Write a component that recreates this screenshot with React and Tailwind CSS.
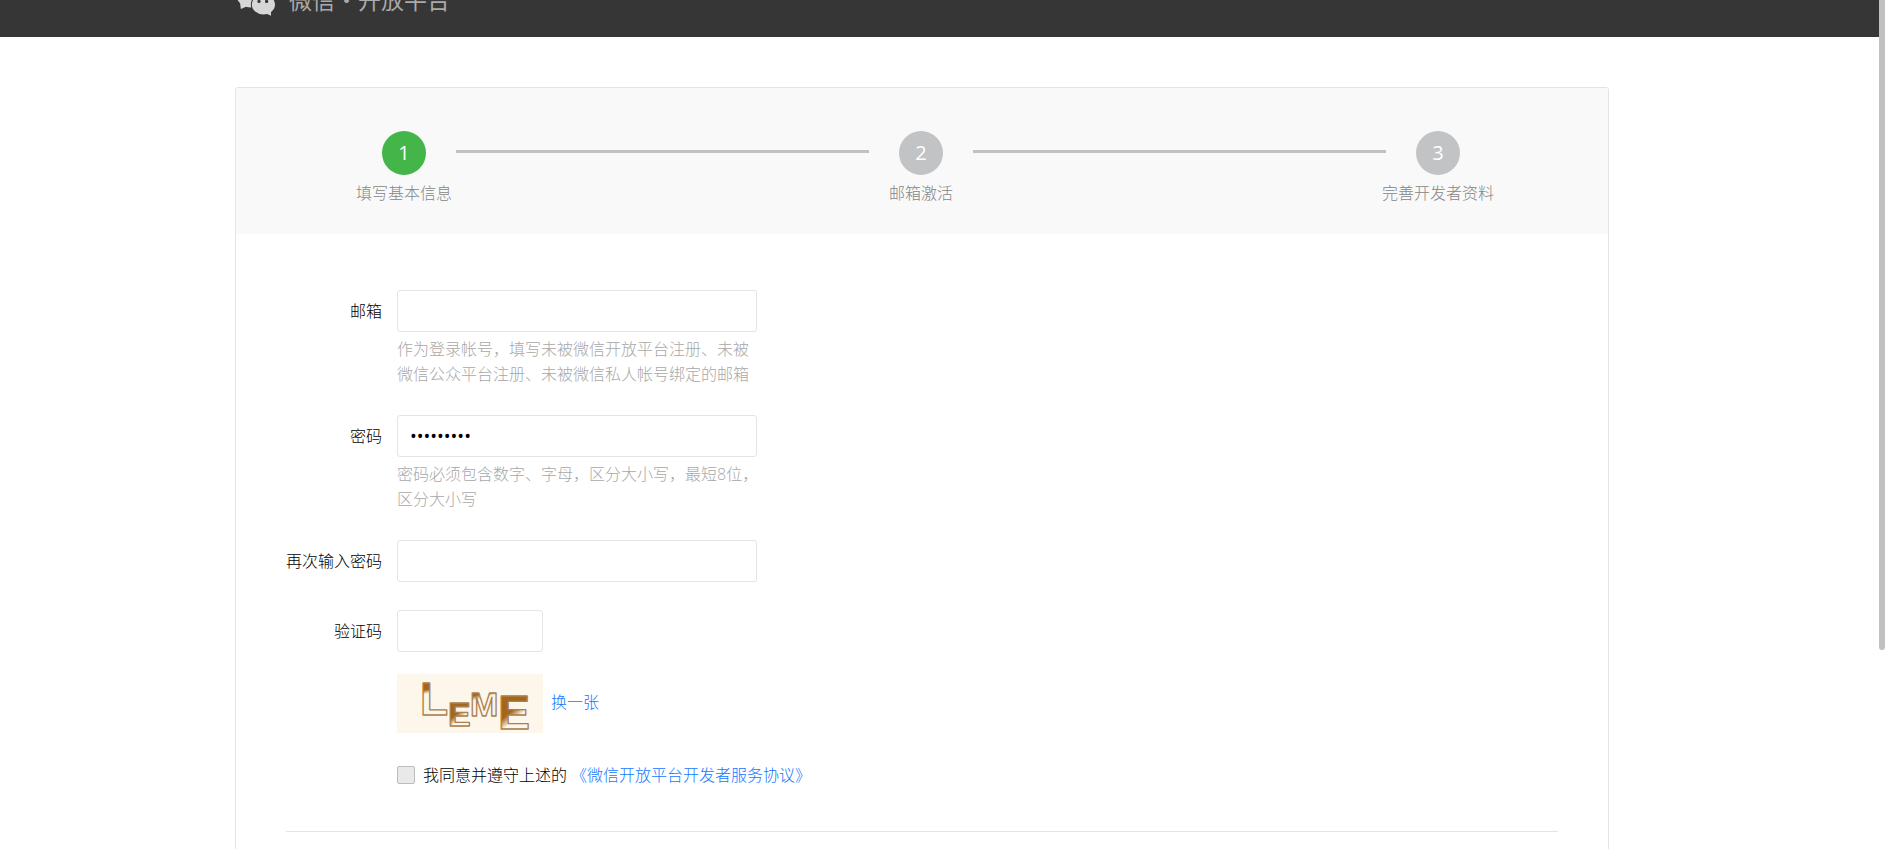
const STEPS = ['填写基本信息', '邮箱激活', '完善开发者资料'];

const INPUT =
  'block h-[42px] max-w-full rounded-[3px] border border-[#e4e4e4] bg-white px-3 text-black outline-none';

function Logo() {
  return (
    <svg className="h-[38px] w-[42px] shrink-0" viewBox="0 0 42 38" aria-hidden="true">
      <ellipse cx="16" cy="14" rx="14.5" ry="12.5" fill="#d6d6d6" />
      <path d="M5 21 L5.8 28 L14 24.5 Z" fill="#d6d6d6" />
      <ellipse cx="28.4" cy="23.6" rx="12.6" ry="10.9" fill="#363636" />
      <ellipse cx="28.4" cy="23.6" rx="11.6" ry="9.9" fill="#d6d6d6" />
      <path d="M30 32 L36 34.8 L36 28 Z" fill="#d6d6d6" />
      <circle cx="24" cy="20.4" r="1.6" fill="#363636" />
      <circle cx="31.6" cy="20.4" r="1.6" fill="#363636" />
    </svg>
  );
}

function Header() {
  return (
    <header className="h-[37px] overflow-hidden bg-[#363636] pl-[235px]">
      <div className="-mt-[37px] flex h-[74px] items-center gap-3">
        <Logo />
        <span className="whitespace-nowrap text-[23px] font-normal text-[#aaa]">微信・开放平台</span>
      </div>
    </header>
  );
}

function Step({ index, label, active }) {
  return (
    <li className="flex w-[104px] shrink-0 flex-col items-center">
      <span
        className={
          'flex size-11 items-center justify-center rounded-full text-xl font-normal text-white ' +
          (active ? 'bg-[#44b549]' : 'bg-[#c2c3c5]')
        }
      >
        {index}
      </span>
      <span className="mt-1.5 whitespace-nowrap leading-6 text-[#868686]">{label}</span>
    </li>
  );
}

function Steps() {
  return (
    <ol className="flex h-[146px] items-start bg-[#f9f9f9] pt-[43px] pr-[118px] pl-[116px]">
      {STEPS.map((label, i) => [
        i > 0 && <li key={'line' + i} aria-hidden="true" className="mt-[19px] h-[3px] flex-1 bg-[#c1c1c1]" />,
        <Step key={label} index={i + 1} label={label} active={i === 0} />,
      ])}
    </ol>
  );
}

function Field({ id, label, hint, children }) {
  return (
    <div className="flex items-start gap-[15px]">
      <label htmlFor={id} className="w-24 shrink-0 whitespace-nowrap text-right leading-[42px] text-black">
        {label}
      </label>
      <div>
        {children}
        {hint && <p className="mt-[5px] w-[364px] leading-[25px] text-[#a8a8a8]">{hint}</p>}
      </div>
    </div>
  );
}

function Captcha() {
  return (
    <svg
      className="h-[59px] w-[146px] overflow-visible bg-[#fdf6eb]"
      viewBox="0 0 146 59"
      role="img"
      aria-label="LEME"
      fontFamily="Liberation Sans, sans-serif"
      fontWeight="700"
      stroke="#a8814f"
      strokeWidth="1.3"
      strokeLinejoin="round"
    >
      <defs>
        <linearGradient id="ink-corner" x1="0" y1="0" x2="0.1" y2="1">
          <stop offset="0.34" stopColor="#a5651c" />
          <stop offset="0.42" stopColor="#fdf6eb" />
        </linearGradient>
        <linearGradient id="ink-edge" x1="0" y1="0" x2="0.2" y2="1">
          <stop offset="0.3" stopColor="#a5651c" />
          <stop offset="0.42" stopColor="#fdf6eb" />
        </linearGradient>
        <linearGradient id="ink-half" x1="0" y1="0" x2="0.5" y2="1">
          <stop offset="0.55" stopColor="#a5651c" />
          <stop offset="0.72" stopColor="#fdf6eb" />
        </linearGradient>
      </defs>
      <text x="23" y="41" fontSize="46" fill="url(#ink-corner)">L</text>
      <text x="51" y="52" fontSize="34" fill="url(#ink-half)">E</text>
      <text x="73" y="42" fontSize="34" fill="url(#ink-edge)">M</text>
      <text x="101" y="55" fontSize="48" fill="url(#ink-half)">E</text>
    </svg>
  );
}

function RegisterForm() {
  return (
    <form className="px-[50px] pt-14 pb-24" onSubmit={(e) => e.preventDefault()}>
      <div className="flex flex-col gap-7">
        <Field id="email" label="邮箱" hint="作为登录帐号，填写未被微信开放平台注册、未被微信公众平台注册、未被微信私人帐号绑定的邮箱">
          <input id="email" type="email" className={INPUT + ' w-[360px] text-base'} />
        </Field>
        <Field id="password" label="密码" hint="密码必须包含数字、字母，区分大小写，最短8位，区分大小写">
          <input
            id="password"
            type="password"
            defaultValue="abcd12345"
            className={INPUT + ' w-[360px] text-lg font-normal'}
          />
        </Field>
        <Field id="confirm" label="再次输入密码">
          <input id="confirm" type="password" className={INPUT + ' w-[360px] text-lg font-normal'} />
        </Field>
        <Field id="code" label="验证码">
          <input id="code" type="text" className={INPUT + ' w-[146px] text-base'} />
        </Field>
      </div>
      <div className="pl-[111px]">
        <div className="mt-[22px] flex items-center gap-2">
          <Captcha />
          <a href="#captcha" className="pb-1 text-[#1477ff]">换一张</a>
        </div>
        <div className="mt-[30px] flex h-6 items-center">
          <input
            id="agree"
            type="checkbox"
            className="size-[18px] appearance-none rounded-[2px] border border-[#bcbcbc] bg-[#e9e9e9]"
          />
          <label htmlFor="agree" className="ml-2 text-black">我同意并遵守上述的</label>
          <a href="#agreement" className="ml-1 text-[#1477ff]">《微信开放平台开发者服务协议》</a>
        </div>
      </div>
      <hr className="mt-11 border-[#e4e4e4]" />
    </form>
  );
}

export default function App() {
  return (
    <div
      lang="zh-CN"
      className="h-screen overflow-hidden bg-white font-['Open_Sans','Noto_Sans_CJK_SC',sans-serif] text-base font-light"
    >
      <Header />
      <main className="pt-[50px] pr-[276px] pl-[235px]">
        <section className="overflow-hidden rounded-[3px] border border-[#e4e4e4]">
          <Steps />
          <RegisterForm />
        </section>
      </main>
      <div className="fixed top-0 right-0 h-[650px] w-1.5 rounded-b-full bg-[#c1c1c1]" />
    </div>
  );
}
